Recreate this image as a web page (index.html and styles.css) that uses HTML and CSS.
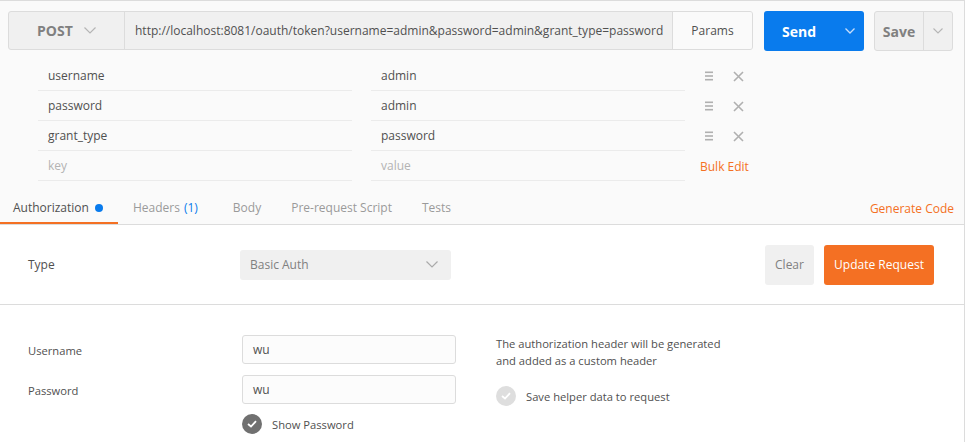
FILE: index.html
```html
<!DOCTYPE html>
<html>
<head>
<meta charset="utf-8">
<link rel="stylesheet" href="styles.css">
</head>
<body>
<div class="app">
  <div class="request">
    <div class="url-row">
      <div class="url-group">
        <div class="method">POST
          <svg class="chev" width="12" height="7" viewBox="0 0 12 7"><polyline points="0.5,0.5 6,6 11.5,0.5" fill="none" stroke="#b5b5b5" stroke-width="1.2"/></svg>
        </div>
        <div class="url">http://localhost:8081/oauth/token?username=admin&amp;password=admin&amp;grant_type=password</div>
        <div class="params-btn">Params</div>
      </div>
      <div class="send">
        <span class="send-label">Send</span>
        <svg class="send-chev" width="10" height="6" viewBox="0 0 10 6"><polyline points="0.5,0.5 5,5 9.5,0.5" fill="none" stroke="#c8defa" stroke-width="1.3"/></svg>
      </div>
      <div class="save">
        <span class="save-label">Save</span>
        <span class="save-drop"><svg width="10" height="6" viewBox="0 0 10 6"><polyline points="0.5,0.5 5,5 9.5,0.5" fill="none" stroke="#b5b5b5" stroke-width="1.1"/></svg></span>
      </div>
    </div>

    <div class="params">
      <div class="param-row">
        <div class="cell">username</div>
        <div class="cell value">admin</div>
        <div class="actions">
          <svg class="drag" width="8" height="10" viewBox="0 0 8 10"><rect x="0" y="0.5" width="8" height="1.6" fill="#b0b0b0"/><rect x="0" y="4.2" width="8" height="1.6" fill="#b0b0b0"/><rect x="0" y="7.9" width="8" height="1.6" fill="#b0b0b0"/></svg>
          <svg class="del" width="11" height="11" viewBox="0 0 11 11"><path d="M1 1L10 10M10 1L1 10" stroke="#b0b0b0" stroke-width="1.6"/></svg>
        </div>
      </div>
      <div class="param-row">
        <div class="cell">password</div>
        <div class="cell value">admin</div>
        <div class="actions">
          <svg class="drag" width="8" height="10" viewBox="0 0 8 10"><rect x="0" y="0.5" width="8" height="1.6" fill="#b0b0b0"/><rect x="0" y="4.2" width="8" height="1.6" fill="#b0b0b0"/><rect x="0" y="7.9" width="8" height="1.6" fill="#b0b0b0"/></svg>
          <svg class="del" width="11" height="11" viewBox="0 0 11 11"><path d="M1 1L10 10M10 1L1 10" stroke="#b0b0b0" stroke-width="1.6"/></svg>
        </div>
      </div>
      <div class="param-row">
        <div class="cell">grant_type</div>
        <div class="cell value">password</div>
        <div class="actions">
          <svg class="drag" width="8" height="10" viewBox="0 0 8 10"><rect x="0" y="0.5" width="8" height="1.6" fill="#b0b0b0"/><rect x="0" y="4.2" width="8" height="1.6" fill="#b0b0b0"/><rect x="0" y="7.9" width="8" height="1.6" fill="#b0b0b0"/></svg>
          <svg class="del" width="11" height="11" viewBox="0 0 11 11"><path d="M1 1L10 10M10 1L1 10" stroke="#b0b0b0" stroke-width="1.6"/></svg>
        </div>
      </div>
      <div class="param-row">
        <div class="cell placeholder">key</div>
        <div class="cell value placeholder">value</div>
        <div class="bulk">Bulk Edit</div>
      </div>
    </div>

    <div class="tabs">
      <div class="tab active">Authorization <span class="dot"></span></div>
      <div class="tab">Headers <span class="count">(1)</span></div>
      <div class="tab">Body</div>
      <div class="tab">Pre-request Script</div>
      <div class="tab">Tests</div>
      <div class="gen">Generate Code</div>
    </div>
  </div>

  <div class="auth">
    <div class="type-row">
      <div class="label type-label">Type</div>
      <div class="select">Basic Auth
        <svg width="12" height="7" viewBox="0 0 12 7"><polyline points="0.5,0.5 6,6 11.5,0.5" fill="none" stroke="#aaa" stroke-width="1.2"/></svg>
      </div>
      <div class="btn-clear">Clear</div>
      <div class="btn-update">Update Request</div>
    </div>

    <div class="auth-body">
      <div class="form">
        <div class="form-row">
          <div class="label form-label">Username</div>
          <div class="input">wu</div>
        </div>
        <div class="form-row">
          <div class="label form-label">Password</div>
          <div class="input">wu</div>
        </div>
        <div class="check-row show-pass">
          <span class="circle dark"><svg width="10" height="8" viewBox="0 0 10 8"><polyline points="1,4 4,6.5 9,1.2" fill="none" stroke="#fff" stroke-width="1.8"/></svg></span>
          <span>Show Password</span>
        </div>
      </div>
      <div class="help">
        <p class="help-text">The authorization header will be generated<br>and added as a custom header</p>
        <div class="check-row">
          <span class="circle light"><svg width="10" height="8" viewBox="0 0 10 8"><polyline points="1,4 4,6.5 9,1.2" fill="none" stroke="#fff" stroke-width="1.8"/></svg></span>
          <span>Save helper data to request</span>
        </div>
      </div>
    </div>
  </div>
</div>
</body>
</html>
```
FILE: styles.css
```css
* { box-sizing: border-box; }
html, body { margin: 0; padding: 0; background: #fff; }
body {
  font-family: "Open Sans", "Liberation Sans", sans-serif;
  font-size: 12px;
  color: #505050;
}
.app {
  width: 965px;
  height: 442px;
  border-top: 1px solid #dcdcdc;
  border-right: 1px solid #dcdcdc;
  overflow: hidden;
}
.request { background: #fafafa; }

.url-row {
  display: flex;
  padding: 10px 0 0 8px;
  height: 50px;
}
.url-group {
  display: flex;
  width: 745px;
  height: 39px;
  border: 1px solid #dcdcdc;
  border-radius: 3px;
  background: #f0f0f0;
  overflow: hidden;
}
.method {
  width: 116px;
  display: flex;
  align-items: center;
  padding-left: 28px;
  font-size: 14px;
  font-weight: 700;
  color: #808080;
  border-right: 1px solid #dcdcdc;
}
.method .chev { margin-left: 11px; }
.url {
  flex: 1;
  display: flex;
  align-items: center;
  padding-left: 10px;
  white-space: nowrap;
}
.params-btn {
  width: 80px;
  display: flex;
  align-items: center;
  justify-content: center;
  background: #fafafa;
  border-left: 1px solid #dcdcdc;
}
.send {
  margin-left: 11px;
  width: 100px;
  height: 40px;
  background: #097bed;
  border-radius: 3px;
  display: flex;
  align-items: center;
  color: #fff;
  font-size: 14px;
  font-weight: 700;
}
.send-label { margin-left: 18px; }
.send-chev { margin-left: 29px; }
.save {
  margin-left: 10px;
  width: 79px;
  height: 40px;
  border: 1px solid #dcdcdc;
  border-radius: 3px;
  background: #f0f0f0;
  display: flex;
  color: #808080;
  font-size: 14px;
  font-weight: 700;
}
.save-label {
  width: 49px;
  display: flex;
  align-items: center;
  justify-content: center;
  border-right: 1px solid #dcdcdc;
}
.save-drop {
  flex: 1;
  display: flex;
  align-items: center;
  justify-content: center;
}

.params { padding-top: 10px; }
.param-row {
  display: flex;
  align-items: center;
  height: 30px;
  padding-left: 38px;
}
.cell {
  width: 314px;
  height: 30px;
  line-height: 29px;
  padding-left: 10px;
  border-bottom: 1px solid #ebebeb;
  color: #505050;
}
.cell.value { margin-left: 19px; }
.placeholder { color: #b3b3b3; }
.actions {
  display: flex;
  align-items: center;
  margin-left: 20px;
}
.drag { margin-right: 20px; }
.bulk {
  margin-left: 15px;
  color: #f47023;
  font-size: 12px;
}

.tabs {
  display: flex;
  margin-top: 12px;
  border-bottom: 1px solid #dcdcdc;
  height: 32px;
}
.tab {
  height: 31px;
  line-height: 29px;
  padding: 0 15px;
  color: #9a9a9a;
  border-bottom: 2px solid transparent;
  display: flex;
  align-items: center;
}
.tab.active {
  padding-left: 13px;
  color: #505050;
  border-bottom-color: #f47023;
}
.dot {
  display: inline-block;
  width: 8px;
  height: 8px;
  border-radius: 50%;
  background: #097bed;
  margin-left: 6px;
}
.count { color: #097bed; margin-left: 4px; }
.tabs .tab:nth-child(3) { padding-left: 20px; }
.gen {
  margin-left: auto;
  padding-right: 10px;
  padding-top: 1px;
  line-height: 29px;
  color: #f47023;
}

.auth { background: #fff; }
.type-row {
  display: flex;
  align-items: center;
  height: 80px;
  padding: 0 30px 0 28px;
  border-bottom: 1px solid #dcdcdc;
}
.label { color: #505050; }
.type-label { width: 212px; }
.select {
  width: 211px;
  height: 30px;
  background: #f0f0f0;
  border-radius: 3px;
  display: flex;
  align-items: center;
  justify-content: space-between;
  padding: 0 13px 0 10px;
  color: #808080;
}
.btn-clear {
  margin-left: auto;
  width: 49px;
  height: 40px;
  background: #f0f0f0;
  border-radius: 3px;
  display: flex;
  align-items: center;
  justify-content: center;
  color: #808080;
}
.btn-update {
  margin-left: 10px;
  width: 110px;
  height: 40px;
  background: #f47023;
  border-radius: 3px;
  display: flex;
  align-items: center;
  justify-content: center;
  color: #fff;
}

.auth-body {
  display: flex;
  padding: 30px 0 0 28px;
  font-size: 11.2px;
}
.form { width: 428px; }
.form-row {
  display: flex;
  align-items: center;
  margin-bottom: 11px;
}
.form-label { width: 214px; padding-top: 2px; }
.input {
  width: 214px;
  height: 29px;
  border: 1px solid #dcdcdc;
  border-radius: 3px;
  background: #fcfcfc;
  display: flex;
  align-items: center;
  padding-left: 10px;
  color: #505050;
  font-size: 12px;
}
.check-row {
  display: flex;
  align-items: center;
  color: #505050;
}
.show-pass { margin-left: 214px; margin-top: -1px; }
.circle {
  width: 20px;
  height: 20px;
  border-radius: 50%;
  display: flex;
  align-items: center;
  justify-content: center;
  margin-right: 10px;
}
.circle.dark { background: #707070; }
.circle.light { background: #dedede; }
.help { margin-left: 40px; }
.help-text {
  margin: 0 0 17px 0;
  line-height: 17px;
}
```
